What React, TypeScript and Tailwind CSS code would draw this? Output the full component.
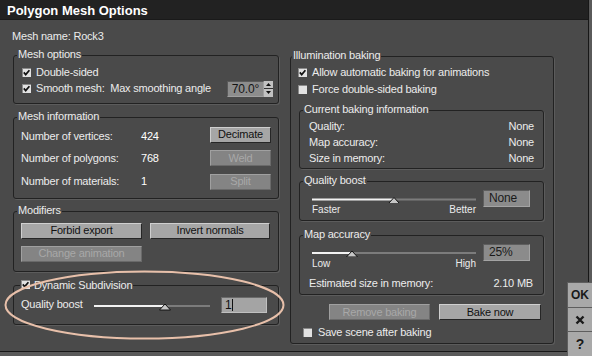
import React from 'react';

function Check({ checked }: { checked?: boolean }) {
  return (
    <span className="w-[9px] h-[9px] shrink-0 bg-[#e2e2e2] shadow-[inset_1px_1px_0_#8a8a8a] flex items-center justify-center">
      {checked && (
        <svg width="9" height="9" viewBox="0 0 9 9">
          <path d="M1.8 4.4 L3.7 6.6 L7.4 2.2" fill="none" stroke="#111" strokeWidth="1.7" />
        </svg>
      )}
    </span>
  );
}

function Btn({ label, disabled, className = '' }: { label: string; disabled?: boolean; className?: string }) {
  return (
    <div
      className={
        'h-[16px] flex items-center justify-center border ' +
        (disabled
          ? 'bg-[#848484] text-[#a8a8a8] border-t-[#a0a0a0] border-l-[#a0a0a0] border-b-[#6a6a6a] border-r-[#6a6a6a] '
          : 'bg-[#a6a6a6] text-[#111] border-t-[#cfcfcf] border-l-[#cfcfcf] border-b-[#262626] border-r-[#262626] ') +
        className
      }
    >
      {label}
    </div>
  );
}

function Slider({ w, h, pos, ty }: { w: number; h: number; pos: number; ty: number }) {
  return (
    <svg width={w} height={h} className="shrink-0">
      <line x1={0} x2={pos} y1={ty} y2={ty} stroke="#f2f2f2" strokeWidth={2} />
      <line x1={pos} x2={w} y1={ty} y2={ty} stroke="#7c7c7c" strokeWidth={2} />
      <path d={`M${pos} ${ty - 2} L${pos + 5.5} ${ty + 4} L${pos - 5.5} ${ty + 4} Z`} fill="#c6c6c6" stroke="#111" strokeWidth={1} />
    </svg>
  );
}

function ValueBox({ text, className = '' }: { text: string; className?: string }) {
  return (
    <div className={'h-[17px] bg-[#8b8b8b] border border-t-[#5e5e5e] border-l-[#5e5e5e] border-b-[#a4a4a4] border-r-[#a4a4a4] text-[#1a1a1a] text-[12px] pl-[5px] flex items-center ' + className}>
      {text}
    </div>
  );
}

const box = 'border border-[#222] rounded-[3px] shadow-[1px_1px_0_#5c5c5c] min-w-0';
const legend = 'leading-[14px] pb-[3px] px-[1px]';

export default function App() {
  return (
    <div className="relative w-[592px] h-[356px] bg-[#5a5a5a] overflow-hidden font-['Liberation_Sans',Arial,sans-serif] text-[11px] tracking-[-0.2px] text-[#ececec]">
      <div className="w-[589px] h-[352px] bg-[#4a4a4a] border-r border-b border-[#171717] flex flex-col">
        <div className="h-[20px] shrink-0 bg-[#222] border-b border-[#1a1a1a] flex items-center pl-[7px] pt-[2px] text-[13px] font-bold text-white tracking-normal">
          Polygon Mesh Options
        </div>

        <div className="flex flex-row">
          {/* left column */}
          <div className="pl-[12px] pt-[9px] w-[279px] shrink-0 flex flex-col">
            <div className="leading-[14px]">Mesh name: Rock3</div>

            <fieldset className={box + ' ml-[1px] mt-[4px]'}>
              <legend className={legend + ' ml-[3px]'}>Mesh options</legend>
              <div className="pl-[8px] pr-[5px] pt-[1px] pb-[6px] flex flex-col gap-[1px]">
                <div className="h-[14px] flex items-center gap-[5px]">
                  <Check checked />
                  <span>Double-sided</span>
                </div>
                <div className="h-[17px] flex items-center gap-[5px]">
                  <Check checked />
                  <span className="whitespace-pre">Smooth mesh:  Max smoothing angle</span>
                  <div className="ml-auto flex h-[16px]">
                    <div className="w-[37px] bg-[#8d8d8d] border border-t-[#5a5a5a] border-l-[#5a5a5a] border-b-[#a0a0a0] border-r-[#a0a0a0] text-[#141414] text-[12px] flex items-center justify-end pr-[4px]">
                      70.0°
                    </div>
                    <div className="w-[9px] flex flex-col gap-[1px] bg-[#333]">
                      <div className="flex-1 bg-[#c2c2c2] flex items-center justify-center">
                        <svg width="5" height="3"><path d="M2.5 0 L5 3 L0 3 Z" fill="#111" /></svg>
                      </div>
                      <div className="flex-1 bg-[#c2c2c2] flex items-center justify-center">
                        <svg width="5" height="3"><path d="M0 0 L5 0 L2.5 3 Z" fill="#111" /></svg>
                      </div>
                    </div>
                  </div>
                </div>
              </div>
            </fieldset>

            <fieldset className={box + ' ml-[1px] mt-[5px]'}>
              <legend className={legend + ' ml-[3px]'}>Mesh information</legend>
              <div className="pl-[7px] pr-[7px] pb-[8px] flex flex-row">
                <div className="pt-[2.5px] grid grid-cols-[120px_auto] gap-y-[7.5px] leading-[14px]">
                  <span>Number of vertices:</span>
                  <span className="text-white">424</span>
                  <span>Number of polygons:</span>
                  <span className="text-white">768</span>
                  <span>Number of materials:</span>
                  <span className="text-white">1</span>
                </div>
                <div className="ml-auto pt-[0.5px] w-[61px] flex flex-col gap-[7.5px]">
                  <Btn label="Decimate" />
                  <Btn label="Weld" disabled />
                  <Btn label="Split" disabled />
                </div>
              </div>
            </fieldset>

            <fieldset className={box + ' ml-[1px] mt-[4px]'}>
              <legend className={legend + ' ml-[3px]'}>Modifiers</legend>
              <div className="pl-[7px] pr-[7px] pt-[3px] pb-[9px] grid grid-cols-[121px_120px] gap-x-[8px] gap-y-[7px]">
                <Btn label="Forbid export" />
                <Btn label="Invert normals" />
                <Btn label="Change animation" disabled />
              </div>
            </fieldset>

            <fieldset className={box + ' ml-[1px] mt-[6px]'}>
              <legend className="leading-[14px] pb-[2px] ml-[6px] px-[1px] flex items-center gap-[4px]">
                <Check checked />
                <span>Dynamic Subdivision</span>
              </legend>
              <div className="pl-[7px] pr-[10px] pt-[3px] pb-[11px] flex flex-row items-center h-[30px]">
                <span className="w-[73px] shrink-0">Quality boost</span>
                <Slider w={116} h={16} pos={71} ty={9} />
                <div className="ml-[11px] w-[46px] h-[16px] bg-[#a4a4a4] border border-t-[#6a6a6a] border-l-[#6a6a6a] border-b-[#c0c0c0] border-r-[#c0c0c0] text-[#111] text-[12px] pl-[3px] flex items-center">
                  1<span className="w-[1px] h-[12px] bg-[#111] ml-[1px]" />
                </div>
              </div>
            </fieldset>
          </div>

          {/* right column */}
          <div className="ml-[11px] pt-[27.5px] w-[264px] shrink-0">
            <fieldset className={box}>
              <legend className={legend + ' ml-[1px]'}>Illumination baking</legend>
              <div className="pl-[7px] pr-[9px] pb-[4px] flex flex-col">
                <div className="h-[14px] mt-[1px] flex items-center gap-[5px]">
                  <Check checked />
                  <span>Allow automatic baking for animations</span>
                </div>
                <div className="h-[14px] mt-[3px] flex items-center gap-[5px]">
                  <Check />
                  <span>Force double-sided baking</span>
                </div>

                <fieldset className={box + ' ml-[1px] mt-[5px]'}>
                  <legend className={legend + ' ml-[3px]'}>Current baking information</legend>
                  <div className="pl-[9px] pr-[9px] pb-[3px] flex flex-col gap-[2px] leading-[14px]">
                    <div className="flex justify-between"><span>Quality:</span><span>None</span></div>
                    <div className="flex justify-between"><span>Map accuracy:</span><span>None</span></div>
                    <div className="flex justify-between"><span>Size in memory:</span><span>None</span></div>
                  </div>
                </fieldset>

                <fieldset className={box + ' ml-[1px] mt-[4px]'}>
                  <legend className={legend + ' ml-[3px]'}>Quality boost</legend>
                  <div className="pl-[12px] pr-[13px] pb-[3px] flex flex-row">
                    <div className="w-[164px] flex flex-col">
                      <Slider w={164} h={13} pos={82} ty={9.5} />
                      <div className="flex justify-between leading-[14px] text-[10px] tracking-normal">
                        <span>Faster</span>
                        <span>Better</span>
                      </div>
                    </div>
                    <ValueBox text="None" className="ml-[7px] w-[47px]" />
                  </div>
                </fieldset>

                <fieldset className={box + ' ml-[1px] mt-[6px]'}>
                  <legend className={legend + ' ml-[3px]'}>Map accuracy</legend>
                  <div className="pb-[4px] flex flex-col">
                    <div className="pl-[12px] pr-[13px] flex flex-row">
                      <div className="w-[164px] flex flex-col">
                        <Slider w={164} h={13} pos={40} ty={9} />
                        <div className="flex justify-between leading-[14px] text-[10px] tracking-normal">
                          <span>Low</span>
                          <span>High</span>
                        </div>
                      </div>
                      <ValueBox text="25%" className="ml-[7px] w-[47px]" />
                    </div>
                    <div className="mt-[5px] pl-[9px] pr-[10px] flex justify-between leading-[14px]">
                      <span>Estimated size in memory:</span>
                      <span>2.10 MB</span>
                    </div>
                  </div>
                </fieldset>

                <div className="mt-[9.5px] pr-[3px] flex justify-end gap-[9px]">
                  <Btn label="Remove baking" disabled className="w-[101px]" />
                  <Btn label="Bake now" className="w-[102px]" />
                </div>

                <div className="mt-[5px] ml-[5px] h-[14px] flex items-center gap-[6px]">
                  <Check />
                  <span>Save scene after baking</span>
                </div>
              </div>
            </fieldset>
          </div>
        </div>
      </div>

      {/* OK / cancel / help strip */}
      <div className="absolute right-0 bottom-0 w-[25px] flex flex-col bg-[#5e5e5e] gap-[1px] pt-[1px] pl-[1px] text-[#1a1a1a] font-bold tracking-normal">
        <div className="h-[24px] bg-[#a9a9a9] flex items-center justify-center text-[12px]">OK</div>
        <div className="h-[23px] bg-[#a9a9a9] flex items-center justify-center">
          <svg width="10" height="10" viewBox="0 0 10 10">
            <path d="M1.5 1.5 L8.5 8.5 M8.5 1.5 L1.5 8.5" stroke="#1a1a1a" strokeWidth="2.4" />
          </svg>
        </div>
        <div className="h-[24px] bg-[#a9a9a9] flex items-center justify-center text-[14px]">?</div>
      </div>

      {/* annotation ring */}
      <svg className="absolute left-[4px] top-[270px] pointer-events-none" width="281" height="70">
        <ellipse cx="140.5" cy="35" rx="139" ry="33.5" fill="none" stroke="#e8c0aa" strokeWidth="2" />
      </svg>
    </div>
  );
}
